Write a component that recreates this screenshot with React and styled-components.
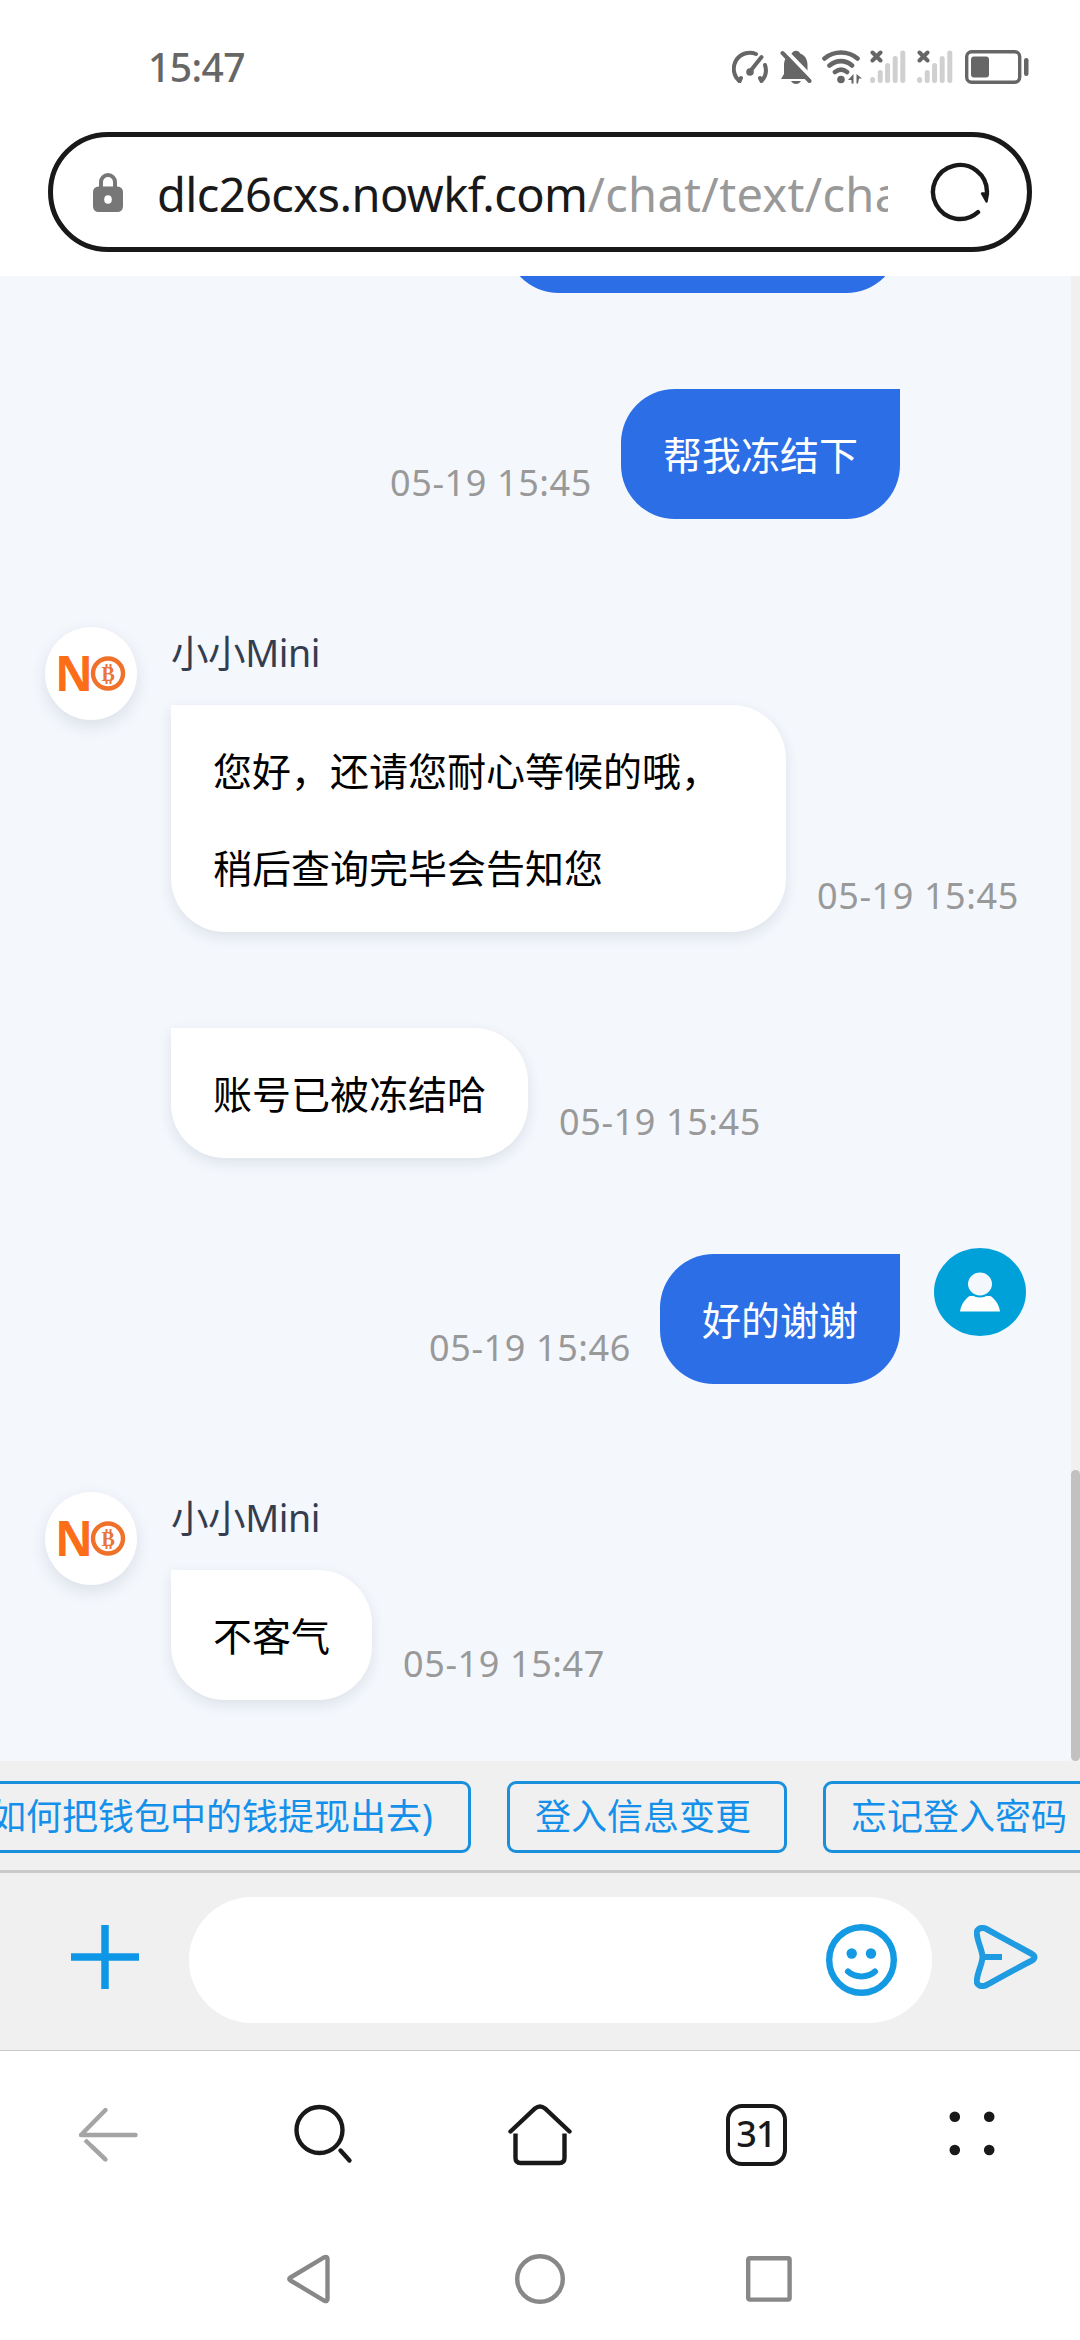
import React from 'react';
import styled, { createGlobalStyle } from 'styled-components';

const GlobalStyle = createGlobalStyle`
  * {
    box-sizing: border-box;
  }

  body {
    margin: 0;
    background: #fff;
    font-family: 'Noto Sans', 'Noto Sans CJK SC', sans-serif;
  }

  svg {
    display: block;
    flex: none;
  }
`;

const Screen = styled.div`
  display: flex;
  flex-direction: column;
  width: 1080px;
  height: 2340px;
  overflow: hidden;
  background: #fff;
`;

const StatusBar = styled.header`
  display: flex;
  align-items: center;
  justify-content: space-between;
  height: 132px;
  padding: 2px 51px 0 148px;
`;

const Clock = styled.span`
  font-size: 39px;
  font-weight: 500;
  line-height: 50px;
  letter-spacing: -0.6px;
  color: #666;
`;

const StatusIcons = styled.div`
  display: flex;
  align-items: center;
`;

const StatusIcon = styled.svg`
  margin-right: ${({ $gap }) => $gap || 0}px;
`;

const AddressBar = styled.div`
  display: flex;
  align-items: center;
  width: 984px;
  height: 120px;
  margin: 0 48px 24px;
  padding: 0 37px 0 40px;
  border: 5px solid #191919;
  border-radius: 60px;
`;

const Url = styled.div`
  width: 731px;
  margin: 4px 42px 0 34px;
  overflow: hidden;
  white-space: nowrap;
  font-size: 47px;
  line-height: 70px;
  letter-spacing: -0.6px;
  color: #191919;
`;

const UrlPath = styled.span`
  letter-spacing: 0.3px;
  color: #999;
`;

const Chat = styled.main`
  display: flex;
  height: 1485px;
  overflow: hidden;
  background: #f4f7fc;
`;

const Messages = styled.div`
  flex: 1;
`;

const ScrollTrack = styled.div`
  display: flex;
  flex-direction: column;
  justify-content: flex-end;
  width: 9px;
  background: #f0f0f0;
`;

const ScrollThumb = styled.div`
  height: 291px;
  border-radius: 5px;
  background: #c1c1c1;
`;

const UserRow = styled.div`
  display: flex;
  justify-content: flex-end;
  align-items: flex-start;
  padding-right: 45px;
  margin-top: ${({ $top }) => $top}px;
`;

const AgentRow = styled.div`
  display: flex;
  align-items: flex-start;
  padding-left: 45px;
  margin-top: ${({ $top }) => $top}px;
`;

const Line = styled.div`
  display: flex;
  align-items: flex-end;
  gap: ${({ $gap }) => $gap || 31}px;
  margin-top: ${({ $top }) => $top || 0}px;
`;

const Bubble = styled.div`
  min-width: ${({ $width }) => $width || 0}px;
  min-height: 130px;
  padding: 17px 42px 16px;
  font-size: 39px;
  line-height: 97px;
  white-space: pre-line;
  border-radius: ${({ $mine }) => ($mine ? '54px 0 54px 54px' : '0 54px 54px 54px')};
  color: ${({ $mine }) => ($mine ? '#fff' : '#000')};
  background: ${({ $mine }) => ($mine ? '#2c6ee6' : '#fff')};
  box-shadow: ${({ $mine }) => ($mine ? 'none' : '0 5px 14px rgba(40, 60, 90, 0.11)')};
`;

const Time = styled.time`
  margin-bottom: 11px;
  font-size: 36px;
  line-height: 50px;
  letter-spacing: 0.6px;
  white-space: nowrap;
  color: #999;
`;

const AgentBody = styled.div`
  margin-left: 34px;
`;

const AgentName = styled.div`
  height: 78px;
  font-size: 37.5px;
  line-height: 52px;
  letter-spacing: -0.4px;
  color: #343d4f;
`;

const AgentAvatar = styled.div`
  display: flex;
  align-items: center;
  justify-content: center;
  width: 92px;
  height: 93px;
  border-radius: 50%;
  background: #fff;
  box-shadow: 0 6px 16px rgba(40, 60, 90, 0.12);
`;

const UserAvatar = styled.div`
  width: 92px;
  height: 88px;
  margin: -6px 0 0 34px;
  border-radius: 50%;
  background: #00a1d9;
`;

const AvatarSpace = styled.div`
  width: 126px;
  flex: none;
`;

const QuickReplies = styled.div`
  display: flex;
  gap: 36px;
  height: 112px;
  padding-top: 20px;
  overflow: hidden;
  background: #f0f0f0;
  border-bottom: 3px solid #cacaca;
`;

const Chip = styled.button`
  flex: none;
  width: ${({ $width }) => $width}px;
  height: 72px;
  margin-left: ${({ $offset }) => $offset || 0}px;
  padding: 0 0 1px 25px;
  border: 3px solid #1a90dc;
  border-radius: 9px;
  background: transparent;
  font-family: inherit;
  font-size: 36px;
  line-height: 60px;
  text-align: left;
  white-space: nowrap;
  color: #1590ea;
`;

const Composer = styled.div`
  display: flex;
  align-items: center;
  height: 178px;
  padding: 0 42px 3px 71px;
  background: #f0f0f0;
  border-bottom: 1px solid #cacaca;
`;

const ComposerIcon = styled.svg`
  margin-bottom: 6px;
`;

const InputPill = styled.div`
  display: flex;
  align-items: center;
  justify-content: flex-end;
  width: 744px;
  height: 126px;
  margin: 0 42px 0 50px;
  padding-right: 35px;
  border-radius: 63px;
  background: #fff;
`;

const BrowserNav = styled.nav`
  display: grid;
  grid-template-columns: repeat(5, 216px);
  justify-items: center;
  align-items: center;
  height: 168px;
`;

const TabCount = styled.div`
  width: 61px;
  height: 62px;
  border: 4.5px solid #191919;
  border-radius: 16px;
  font-size: 36px;
  font-weight: 500;
  line-height: 51px;
  letter-spacing: -0.8px;
  text-align: center;
  color: #191919;
`;

const SystemNav = styled.nav`
  display: flex;
  align-items: center;
  height: 121px;
  padding: 0 0 2px 286px;
`;

const SystemButton = styled.svg`
  margin-right: ${({ $gap }) => $gap || 0}px;
`;

const SignalIcon = ({ gap }) => (
  <StatusIcon width="36" height="34" $gap={gap}>
    <g stroke="#d0d0d0" strokeWidth="5" strokeLinecap="round">
      <path d="M2.6 29.5v1M10.2 22.5v8M17.6 15.5v15M25.2 8.5v22M32.8 3v27.5" />
    </g>
    <path d="M2.5 2.5l8 8M10.5 2.5l-8 8" stroke="#666" strokeWidth="4" strokeLinecap="round" />
  </StatusIcon>
);

const AgentLogo = () => (
  <AgentAvatar>
    <svg width="92" height="93" viewBox="0 0 92 93">
      <text
        x="10"
        y="64"
        textLength="38"
        lengthAdjust="spacingAndGlyphs"
        fontFamily="Open Sans"
        fontWeight="700"
        fontSize="49"
        fill="#fc6d17"
      >
        N
      </text>
      <circle cx="63" cy="46.5" r="15" fill="#fff" stroke="#f0712a" strokeWidth="4.4" />
      <text x="56.5" y="53.5" fontFamily="Liberation Serif" fontWeight="700" fontSize="20" fill="#e8743c">
        B
      </text>
      <path d="M61.5 37v4M65.5 37v4M61.5 53v4M65.5 53v4" stroke="#e8743c" strokeWidth="2" />
    </svg>
  </AgentAvatar>
);

const App = () => {
  return (
    <>
      <GlobalStyle />
      <Screen>
        <StatusBar>
          <Clock>15:47</Clock>
          <StatusIcons>
            <StatusIcon width="37" height="34" $gap={11} fill="none" stroke="#666" strokeWidth="4" strokeLinecap="round">
              <path d="M7.5 31A16 16 0 0 1 24 4" />
              <path d="M7.5 31l1.5-3M29.5 31A16 16 0 0 0 33 15M29.5 31l-1.5-3" />
              <path d="M18 21.5L29.5 7" />
              <circle cx="18" cy="22" r="1.8" />
            </StatusIcon>
            <StatusIcon width="32" height="34" $gap={10}>
              <path
                d="M16 .8c2 0 3.6 1.2 4.2 2.8C25 5.5 27.5 9.5 27.5 15v9l3 5H1l3-5v-9c0-5.500 3-9.500 7.800-11.400C12.400 2 14 .8 16 .8zM11 31h10c-1 2-3 3-5 3s-4-1-5-3z"
                fill="#666"
              />
              <path d="M5 0l27 28" stroke="#fff" strokeWidth="4" />
              <path d="M2.5 3l27 28" stroke="#666" strokeWidth="4" strokeLinecap="round" />
            </StatusIcon>
            <StatusIcon width="40" height="34" $gap={8} fill="none" stroke="#666" strokeWidth="4.6" strokeLinecap="round">
              <path d="M2.5 8.5c9.500-8 23.500-8 33 0M7.500 15.500c7-5.800 16-5.800 22.500 0M13 22c3.800-3 8.300-3 12 0" />
              <circle cx="19" cy="29.5" r="3.8" fill="#666" stroke="none" />
              <path d="M31.500 24v9.500h-2v-3.500h-3.500zM34.500 33.500V24l5.500 4.500h-3l-1 5z" fill="#666" stroke="none" />
            </StatusIcon>
            <SignalIcon gap={11} />
            <SignalIcon gap={12} />
            <StatusIcon width="64" height="34">
              <rect x="1.7" y="1.7" width="53" height="30.5" rx="5" fill="none" stroke="#666" strokeWidth="3.4" />
              <rect x="6" y="6.5" width="18" height="21" rx="3" fill="#666" />
              <rect x="59" y="8" width="4.5" height="18" rx="2.2" fill="#666" />
            </StatusIcon>
          </StatusIcons>
        </StatusBar>

        <AddressBar>
          <svg width="30" height="40" viewBox="0 0 30 40">
            <path d="M8 18V10a7 7 0 0 1 14 0v8" fill="none" stroke="#777" strokeWidth="4" />
            <rect x="0" y="14.5" width="30" height="25.5" rx="5.5" fill="#777" />
            <ellipse cx="15" cy="27.5" rx="3.8" ry="4.3" fill="#fff" />
          </svg>
          <Url>
            dlc26cxs.nowkf.com<UrlPath>/chat/text/cha</UrlPath>
          </Url>
          <svg width="60" height="60" viewBox="0 0 60 60">
            <path d="M48 50.1A27 27 0 1 1 57 30" fill="none" stroke="#191919" strokeWidth="4.4" strokeLinecap="round" />
            <path d="M52 31.5h6l-1.5 8z" fill="#191919" stroke="#191919" strokeWidth="2.4" strokeLinejoin="round" />
          </svg>
        </AddressBar>

        <Chat>
          <Messages>
            <UserRow $top={-113}>
              <Bubble $mine $width={395} />
              <AvatarSpace />
            </UserRow>
            <UserRow $top={96}>
              <Line $gap={29}>
                <Time>05-19 15:45</Time>
                <Bubble $mine>帮我冻结下</Bubble>
              </Line>
              <AvatarSpace />
            </UserRow>
            <AgentRow $top={108}>
              <AgentLogo />
              <AgentBody>
                <AgentName>小小Mini</AgentName>
                <Line>
                  <Bubble $width={615}>{'您好，还请您耐心等候的哦，\n稍后查询完毕会告知您'}</Bubble>
                  <Time>05-19 15:45</Time>
                </Line>
                <Line $top={96}>
                  <Bubble>账号已被冻结哈</Bubble>
                  <Time>05-19 15:45</Time>
                </Line>
              </AgentBody>
            </AgentRow>
            <UserRow $top={96}>
              <Line $gap={29}>
                <Time>05-19 15:46</Time>
                <Bubble $mine>好的谢谢</Bubble>
              </Line>
              <UserAvatar>
                <svg width="92" height="88" viewBox="0 0 92 88">
                  <path d="M26 63.5c1-7 5-12.500 9.500-15.500h21c4.500 3 8.500 8.500 9.500 15.500z" fill="#fff" />
                  <ellipse cx="46" cy="36" rx="13" ry="12.5" fill="#f4f8fd" stroke="#00a1d9" strokeWidth="2" />
                </svg>
              </UserAvatar>
            </UserRow>
            <AgentRow $top={108}>
              <AgentLogo />
              <AgentBody>
                <AgentName>小小Mini</AgentName>
                <Line>
                  <Bubble>不客气</Bubble>
                  <Time>05-19 15:47</Time>
                </Line>
              </AgentBody>
            </AgentRow>
          </Messages>
          <ScrollTrack>
            <ScrollThumb />
          </ScrollTrack>
        </Chat>

        <QuickReplies>
          <Chip $width={509} $offset={-38}>如何把钱包中的钱提现出去)</Chip>
          <Chip $width={280}>登入信息变更</Chip>
          <Chip $width={280}>忘记登入密码</Chip>
        </QuickReplies>

        <Composer>
          <ComposerIcon width="68" height="64" viewBox="0 0 68 64">
            <path d="M0 32h68M34 0v64" stroke="#0e97e6" strokeWidth="7.5" />
          </ComposerIcon>
          <InputPill>
            <svg width="71" height="72" viewBox="0 0 71 72" fill="none" stroke="#1499e3">
              <ellipse cx="35.5" cy="36" rx="32.3" ry="32.8" strokeWidth="6.4" />
              <circle cx="25.7" cy="29.5" r="5.2" fill="#1499e3" stroke="none" />
              <circle cx="45" cy="29.5" r="5.2" fill="#1499e3" stroke="none" />
              <path d="M22 47.5c7 6.500 20 6.500 27 0" strokeWidth="6" strokeLinecap="round" />
            </svg>
          </InputPill>
          <ComposerIcon width="64" height="64" viewBox="0 0 64 64" fill="none" stroke="#1f9be2" strokeWidth="6" strokeLinejoin="round">
            <path d="M3 10C1.5 5 6 1.5 11.5 3.5C27 12 45 22 58 29Q63 32 58 35.5C45 42 27 52 11.5 60.5C6 62.5 1.5 59 3 54C4 46 8.5 38 8.5 32C8.5 26 4 18 3 10z" />
            <path d="M8.5 32h19.5" />
          </ComposerIcon>
        </Composer>

        <BrowserNav>
          <svg width="62" height="62" viewBox="0 0 62 62" fill="none" stroke="#a5a5a5" strokeWidth="4.4" strokeLinecap="round">
            <path d="M58.5 31H4L28.5 6" strokeLinejoin="round" />
            <path d="M28.5 55.5L8 36" strokeLinecap="butt" />
            <path d="M28.5 55.5L15 42.5" />
          </svg>
          <svg width="62" height="62" viewBox="0 0 62 62" fill="none" stroke="#191919" strokeWidth="4.4">
            <circle cx="26.5" cy="26" r="23" />
            <path d="M47.5 46.5l9 10" strokeLinecap="round" />
          </svg>
          <svg width="66" height="62" viewBox="0 0 66 62" fill="none" stroke="#191919" strokeWidth="4.4">
            <path d="M3.5 27.5L28 4.5Q33 .5 38 4.5L62.5 27.5" strokeLinecap="round" />
            <path d="M8.5 29.5V54Q8.5 59 13.5 59H52.5Q57.5 59 57.5 54V29.5" />
          </svg>
          <TabCount>31</TabCount>
          <svg width="62" height="62" viewBox="0 0 62 62" fill="#191919">
            <circle cx="13.8" cy="12.7" r="5.3" />
            <circle cx="48.2" cy="12.7" r="5.3" />
            <circle cx="13.8" cy="46" r="5.3" />
            <circle cx="48.2" cy="46" r="5.3" />
          </svg>
        </BrowserNav>

        <SystemNav>
          <SystemButton width="45" height="50" $gap={184} fill="none" stroke="#888" strokeWidth="4.4" strokeLinejoin="round">
            <path d="M4.5 23.5L38.5 3.2Q41.5 2 41.5 5V45Q41.5 48 38.5 46.8L4.5 26.5Q2 25 4.5 23.5z" />
          </SystemButton>
          <SystemButton width="50" height="50" $gap={181} fill="none" stroke="#888" strokeWidth="4.4">
            <circle cx="25" cy="25" r="22.8" />
          </SystemButton>
          <SystemButton width="46" height="46" fill="none" stroke="#888" strokeWidth="4.4">
            <rect x="2.2" y="2.2" width="41.4" height="41.4" rx="1.5" />
          </SystemButton>
        </SystemNav>
      </Screen>
    </>
  );
};

export default App;
